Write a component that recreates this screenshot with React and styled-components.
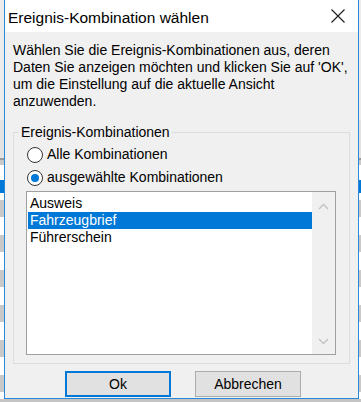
import React, { useState } from "react";
import styled, { createGlobalStyle } from "styled-components";

const GlobalStyle = createGlobalStyle`
  body {
    margin: 0;
    font-family: "Liberation Sans", Arial, sans-serif;
    color: #000;
  }
`;

// the application lying behind the dialog, only its edges show
const Screen = styled.div`
  width: 361px;
  height: 402px;
  overflow: hidden;
  box-sizing: border-box;
  padding-left: 4px;
  display: flex;
  align-items: flex-start;
  background:
    linear-gradient(to bottom, transparent 399px, #c4c4c4 399px),
    linear-gradient(to bottom, transparent 180px, #0078d7 180px, #0078d7 193px, transparent 193px),
    linear-gradient(to bottom, #ececec 120px, #e2e2e2 120px, #e2e2e2 158px, #9a9a9a 158px, #9a9a9a 160px, transparent 160px),
    repeating-linear-gradient(to bottom, #ffffff 0 18px, #c9c9c9 18px 35px);
  background-position: 0 0, 0 0, 0 0, 0 182px;
  background-color: #fff;
`;

const Window = styled.div`
  width: 355px;
  height: 399px;
  box-sizing: border-box;
  border: 1px solid #2b88d8;
  border-top: none;
  display: flex;
  flex-direction: column;
  background: #f0f0f0;
`;

const TitleBar = styled.div`
  height: 32px;
  flex-shrink: 0;
  background: #ffffff;
  display: flex;
  justify-content: space-between;
`;

const Title = styled.div`
  padding: 9px 0 0 3px;
  font-size: 15.5px;
  line-height: normal;
`;

const CloseButton = styled.div`
  width: 40px;
  display: flex;
  align-items: center;
  justify-content: center;
`;

const Body = styled.div`
  flex: 1;
  display: flex;
  flex-direction: column;
  padding: 10px 8px 1px 8px;
  font-size: 14px;
`;

const Intro = styled.p`
  margin: 0;
  line-height: 17px;
`;

const GroupBox = styled.fieldset`
  margin: 14px 0 0;
  padding: 2px 13px 8px 12px;
  border: 1px solid #dcdcdc;
  min-width: 0;
`;

const Legend = styled.legend`
  margin-left: -7px;
  padding: 0 2px;
  font-size: 14px;
  line-height: 17px;
`;

const RadioRow = styled.label`
  height: 23px;
  display: flex;
  align-items: center;
  gap: 4px;
  padding-left: 1px;
  line-height: 17px;
  cursor: default;
`;

const RadioCircle = styled.span`
  width: 16px;
  height: 16px;
  box-sizing: border-box;
  border: 1px solid #333;
  border-radius: 50%;
  background: #fff;
  display: flex;
  align-items: center;
  justify-content: center;

  &::after {
    content: "";
    width: 8px;
    height: 8px;
    border-radius: 50%;
    background: ${(p) => (p.$checked ? "#0078d7" : "transparent")};
  }
`;

const ListBox = styled.div`
  margin-top: 2px;
  height: 164px;
  box-sizing: border-box;
  border: 1px solid #a0a0a0;
  background: #fff;
  display: flex;
`;

const Items = styled.div`
  flex: 1;
  padding: 3px 0 0 1px;
`;

const Item = styled.div`
  height: 17px;
  line-height: 17px;
  padding-left: 2px;
  background: ${(p) => (p.$selected ? "#0078d7" : "transparent")};
  color: ${(p) => (p.$selected ? "#fff" : "#000")};
`;

const Scrollbar = styled.div`
  width: 23px;
  background: #f0f0f0;
  display: flex;
  flex-direction: column;
  justify-content: space-between;
  align-items: center;
  padding: 11px 0 9px;
  box-sizing: border-box;
`;

const ButtonRow = styled.div`
  margin-top: 7px;
  display: flex;
  gap: 24px;
  padding-left: 52px;
`;

const Button = styled.button`
  width: 106px;
  height: 26px;
  box-sizing: border-box;
  background: #e1e1e1;
  border: ${(p) => (p.$default ? "2px solid #0078d7" : "1px solid #adadad")};
  font-family: inherit;
  font-size: 14px;
  color: #000;
  padding: 0;
`;

const Chevron = ({ up }) => (
  <svg width="11" height="7" viewBox="0 0 11 7">
    <path
      d={up ? "M1 6 L5.5 1.5 L10 6" : "M1 1 L5.5 5.5 L10 1"}
      fill="none"
      stroke="#c2c2c2"
      strokeWidth="1.4"
    />
  </svg>
);

const items = ["Ausweis", "Fahrzeugbrief", "Führerschein"];

const App = () => {
  const [mode, setMode] = useState("selected");
  const [selected, setSelected] = useState(1);

  return (
    <Screen>
      <GlobalStyle />
      <Window>
        <TitleBar>
          <Title>Ereignis-Kombination wählen</Title>
          <CloseButton>
            <svg width="14" height="14" viewBox="0 0 14 14">
              <path d="M0.5 0.5 L13.5 13.5 M13.5 0.5 L0.5 13.5" stroke="#1a1a1a" strokeWidth="1.1" />
            </svg>
          </CloseButton>
        </TitleBar>
        <Body>
          <Intro>
            Wählen Sie die Ereignis-Kombinationen aus, deren
            <br />
            Daten Sie anzeigen möchten und klicken Sie auf 'OK',
            <br />
            um die Einstellung auf die aktuelle Ansicht
            <br />
            anzuwenden.
          </Intro>
          <GroupBox>
            <Legend>Ereignis-Kombinationen</Legend>
            <RadioRow onClick={() => setMode("all")}>
              <RadioCircle $checked={mode === "all"} />
              Alle Kombinationen
            </RadioRow>
            <RadioRow onClick={() => setMode("selected")}>
              <RadioCircle $checked={mode === "selected"} />
              ausgewählte Kombinationen
            </RadioRow>
            <ListBox>
              <Items>
                {items.map((name, i) => (
                  <Item key={name} $selected={i === selected} onClick={() => setSelected(i)}>
                    {name}
                  </Item>
                ))}
              </Items>
              <Scrollbar>
                <Chevron up />
                <Chevron />
              </Scrollbar>
            </ListBox>
          </GroupBox>
          <ButtonRow>
            <Button $default>Ok</Button>
            <Button>Abbrechen</Button>
          </ButtonRow>
        </Body>
      </Window>
    </Screen>
  );
};

export default App;
